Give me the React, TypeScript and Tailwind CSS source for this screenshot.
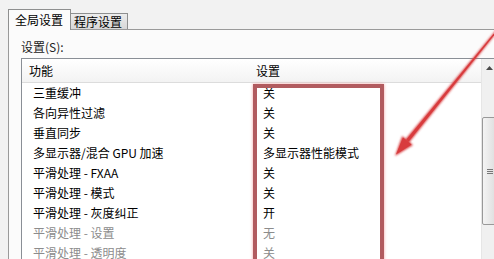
const rows = [
  { name: "三重缓冲", value: "关", dim: false },
  { name: "各向异性过滤", value: "关", dim: false },
  { name: "垂直同步", value: "关", dim: false },
  { name: "多显示器/混合 GPU 加速", value: "多显示器性能模式", dim: false },
  { name: "平滑处理 - FXAA", value: "关", dim: false },
  { name: "平滑处理 - 模式", value: "关", dim: false },
  { name: "平滑处理 - 灰度纠正", value: "开", dim: false },
  { name: "平滑处理 - 设置", value: "无", dim: true },
  { name: "平滑处理 - 透明度", value: "关", dim: true },
];

const font = { fontFamily: '"Noto Sans CJK SC", "Liberation Sans", sans-serif' };

export default function App() {
  return (
    <div
      className="relative w-[494px] h-[259px] overflow-hidden bg-[#f2f2f2] text-[12px] leading-none text-black"
      style={font}
    >
      {/* Tabs */}
      <div className="flex items-end pl-[8px] pt-[8px] h-[29px]">
        <div className="relative z-10 h-[21px] w-[63px] border border-b-0 border-[#8e8f8f] bg-[#fbfbfb] flex items-center pl-[6px] -mb-px">
          全局设置
        </div>
        <div className="h-[16px] w-[57px] border border-l-0 border-b-0 border-[#8e8f8f] bg-gradient-to-b from-[#ececec] to-[#d8d8d8] flex items-center pl-[3px] pt-[1px]">
          程序设置
        </div>
      </div>

      {/* Panel */}
      <div className="ml-[8px] border-t border-l border-[#9a9a9a] bg-[#fbfbfb] h-[240px]">
        <div className="pl-[12px] pt-[11px] h-[28px] text-[#222]">设置(S):</div>
        <div className="ml-[12px] w-[478px] h-[220px] border border-[#8a8f96] bg-white flex">
          <div className="flex-1 flex flex-col">
            {/* Header */}
            <div className="h-[24px] flex items-center border-b border-[#dcdcdc] bg-gradient-to-b from-[#ffffff] to-[#f3f3f3] shrink-0">
              <div className="w-[227px] pl-[7px]">功能</div>
              <div className="pl-[7px]">设置</div>
            </div>
            {rows.map((r) => (
              <div
                key={r.name}
                className={`h-[20px] flex items-center shrink-0 ${r.dim ? "text-[#8c8c8c]" : "text-black"}`}
              >
                <div className="w-[227px] pl-[11px] whitespace-nowrap">{r.name}</div>
                <div className="pl-[14px] whitespace-nowrap">{r.value}</div>
              </div>
            ))}
          </div>
          {/* Scrollbar */}
          <div className="w-[17px] bg-[#f0f0f0] border-l border-[#e6e6e6] flex flex-col items-start shrink-0">
            <div className="h-[17px] w-[14px] flex items-center justify-center">
              <svg width="7" height="4" viewBox="0 0 7 4">
                <path d="M0 4 L3.5 0 L7 4 Z" fill="#4a4a4a" />
              </svg>
            </div>
            <div className="mt-[41px] h-[108px] w-[16px] rounded-[2px] border border-[#999] bg-gradient-to-r from-[#f4f4f4] to-[#dcdcdc] flex items-center justify-center">
              <div className="flex flex-col gap-[1px]">
                <div className="w-[6px] h-px bg-[#777]" />
                <div className="w-[6px] h-px bg-[#777]" />
                <div className="w-[6px] h-px bg-[#777]" />
              </div>
            </div>
          </div>
        </div>
      </div>

      {/* Red annotation box */}
      <div className="absolute left-[253px] top-[84px] w-[131px] h-[200px] border-[4px] border-[#b25b5f] shadow-[0_0_3px_#f5a0a0]" />

      {/* Red arrow */}
      <svg className="absolute left-0 top-0" width="494" height="259" viewBox="0 0 494 259">
        <defs>
          <filter id="glow" x="-20%" y="-20%" width="140%" height="140%">
            <feGaussianBlur stdDeviation="0.8" />
          </filter>
        </defs>
        <g filter="url(#glow)" fill="#d83b3d">
          <polygon points="530.4,-9.7 529.6,-10.3 405.7,138.9 409.5,142.1" />
          <polygon points="395,156 402.2,136.1 413,145" />
        </g>
        <g fill="#d83b3d">
          <polygon points="530.2,-9.8 529.8,-10.2 406.5,139.5 408.7,141.5" />
          <polygon points="396,154.5 403,137.5 411.5,144.5" />
        </g>
      </svg>
    </div>
  );
}
